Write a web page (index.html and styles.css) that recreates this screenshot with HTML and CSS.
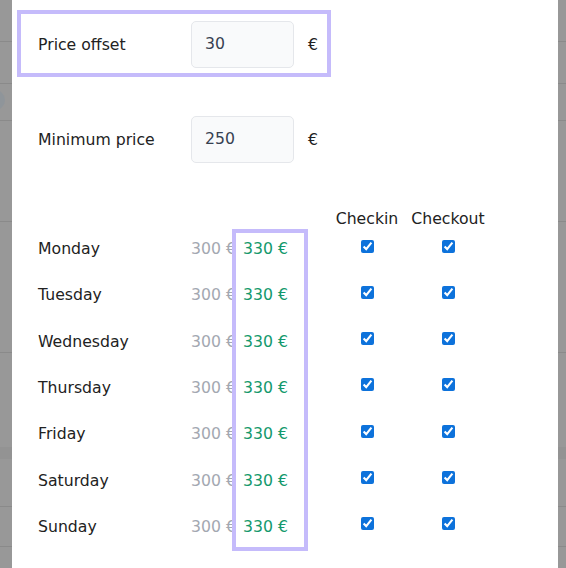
FILE: index.html
```html
<!DOCTYPE html>
<html lang="en">
<head>
    <meta charset="UTF-8">
    <meta name="viewport" content="width=device-width, initial-scale=1.0">
    <title>Weekly prices</title>
    <link rel="stylesheet" href="styles.css">
</head>
<body>
    <!-- page under the dialog, dimmed by the backdrop -->
    <div class="behind">
        <div class="stripe h41"></div>
        <div class="stripe h42"></div>
        <div class="stripe h37"><span class="avatar"></span></div>
        <div class="stripe h101"></div>
        <div class="stripe h131"></div>
        <div class="stripe h94 open"></div>
        <div class="stripe h12 shade"></div>
        <div class="stripe h48"></div>
        <div class="stripe h40"></div>
    </div>

    <div class="modal">
        <div class="field marked">
            <label class="field-label" for="offset">Price offset</label>
            <input class="field-input" id="offset" type="text" value="30">
            <span class="unit">€</span>
        </div>

        <div class="field">
            <label class="field-label" for="minimum">Minimum price</label>
            <input class="field-input" id="minimum" type="text" value="250">
            <span class="unit">€</span>
        </div>

        <div class="days">
            <span></span>
            <span></span>
            <span></span>
            <span class="head">Checkin</span>
            <span class="head">Checkout</span>

            <span class="cell day">Monday</span>
            <span class="cell old">300 €</span>
            <span class="cell new">330 €</span>
            <span class="cell tick"><input type="checkbox" checked></span>
            <span class="cell tick"><input type="checkbox" checked></span>

            <span class="cell day">Tuesday</span>
            <span class="cell old">300 €</span>
            <span class="cell new">330 €</span>
            <span class="cell tick"><input type="checkbox" checked></span>
            <span class="cell tick"><input type="checkbox" checked></span>

            <span class="cell day">Wednesday</span>
            <span class="cell old">300 €</span>
            <span class="cell new">330 €</span>
            <span class="cell tick"><input type="checkbox" checked></span>
            <span class="cell tick"><input type="checkbox" checked></span>

            <span class="cell day">Thursday</span>
            <span class="cell old">300 €</span>
            <span class="cell new">330 €</span>
            <span class="cell tick"><input type="checkbox" checked></span>
            <span class="cell tick"><input type="checkbox" checked></span>

            <span class="cell day">Friday</span>
            <span class="cell old">300 €</span>
            <span class="cell new">330 €</span>
            <span class="cell tick"><input type="checkbox" checked></span>
            <span class="cell tick"><input type="checkbox" checked></span>

            <span class="cell day">Saturday</span>
            <span class="cell old">300 €</span>
            <span class="cell new">330 €</span>
            <span class="cell tick"><input type="checkbox" checked></span>
            <span class="cell tick"><input type="checkbox" checked></span>

            <span class="cell day">Sunday</span>
            <span class="cell old">300 €</span>
            <span class="cell new">330 €</span>
            <span class="cell tick"><input type="checkbox" checked></span>
            <span class="cell tick"><input type="checkbox" checked></span>

            <!-- frame around the new prices -->
            <span class="mark"></span>
        </div>
    </div>
</body>
</html>
```

FILE: styles.css
```css
body{
    margin: 0;
    height: 568px;
    overflow: hidden;
    background: #989898;
    font-family: "DejaVu Sans", sans-serif;
    color: #222;
    position: relative;
}

/* dimmed page */
.behind{
    display: flex;
    flex-direction: column;
}
.stripe{
    border-bottom: 1px solid #8a8a8a;
    box-sizing: border-box;
    position: relative;
}
.h41{ height: 42px; }
.h42{ height: 42px; }
.h37{ height: 37px; }
.h101{ height: 101px; }
.h131{ height: 131px; }
.h94{ height: 94px; }
.h12{ height: 12px; }
.h48{ height: 48px; }
.h40{ height: 40px; }
.open{ border-bottom: none; }
.shade{
    background: #939393;
    border-bottom: none;
}
.avatar{
    display: block;
    width: 20px;
    height: 20px;
    border-radius: 50%;
    background: #8f959a;
    margin: 6px 0 0 -15px;
}

/* dialog */
.modal{
    position: absolute;
    top: 0;
    left: 12px;
    right: 8px;
    bottom: 0;
    background: #fff;
    padding: 10px 0 0 5px;
}

.field{
    display: flex;
    align-items: center;
    width: 314px;
    height: 67px;
    box-sizing: border-box;
    border: 4px solid transparent;
    padding: 2px 0 0 17px;
    font-size: 15.7px;
}
.field + .field{
    margin-top: 28px;
}
.field.marked{
    border-color: #c5bbfb;
}
.field-label{
    width: 153px;
    flex: none;
}
.field-input{
    width: 103px;
    height: 47px;
    box-sizing: border-box;
    border: 1px solid #e5e7eb;
    border-radius: 5px;
    background: #f9fafb;
    padding: 0 0 3px 13px;
    font: inherit;
    font-size: 15.7px;
    color: #374151;
}
.unit{
    margin-left: 14px;
}

/* weekday table */
.days{
    position: relative;
    display: grid;
    grid-template-columns: 153px 41px 76px 118px 44px;
    grid-template-rows: 20px repeat(7, 46.33px);
    align-items: start;
    margin: 37px 0 0 21px;
    font-size: 15.7px;
}
.head{
    justify-self: center;
    line-height: 20px;
    white-space: nowrap;
}
.cell{
    height: 39px;
    display: flex;
    align-items: center;
    white-space: nowrap;
}
.old{
    color: #a3a8b1;
}
.new{
    color: #14996c;
    padding-left: 11px;
}
.tick{
    justify-self: center;
}
.tick input{
    width: 13px;
    height: 13px;
    margin: 0 0 5px;
    accent-color: #0d72db;
}
.mark{
    position: absolute;
    grid-column: 3 / 4;
    grid-row: 2 / -1;
    top: 0;
    left: 0;
    right: 0;
    bottom: 2px;
    border: 4px solid #c5bbfb;
    pointer-events: none;
}
```
